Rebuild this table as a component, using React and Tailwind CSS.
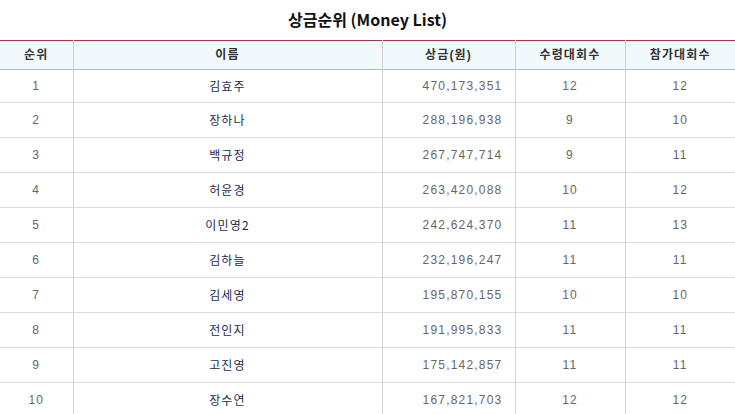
import React from 'react';

const rows = [
  [1, '김효주', '470,173,351', 12, 12],
  [2, '장하나', '288,196,938', 9, 10],
  [3, '백규정', '267,747,714', 9, 11],
  [4, '허윤경', '263,420,088', 10, 12],
  [5, '이민영2', '242,624,370', 11, 13],
  [6, '김하늘', '232,196,247', 11, 11],
  [7, '김세영', '195,870,155', 10, 10],
  [8, '전인지', '191,995,833', 11, 11],
  [9, '고진영', '175,142,857', 11, 11],
  [10, '장수연', '167,821,703', 12, 12],
];

const MoneyList = () => {
  return (
    <div className="w-[735px] bg-white font-['Liberation_Sans','Noto_Sans_CJK_KR',sans-serif]">
      <h1 className="h-[40px] pt-[8px] text-center text-[16px] font-bold leading-[22px] text-[#111] font-['Noto_Sans_CJK_KR',sans-serif]">
        상금순위 (Money List)
      </h1>

      {/* Ranking table */}
      <table className="w-full table-fixed border-collapse text-[12px] tracking-[0.1em]">
        <colgroup>
          <col className="w-[73px]" />
          <col className="w-[309px]" />
          <col className="w-[133px]" />
          <col className="w-[110px]" />
          <col />
        </colgroup>
        <thead>
          <tr className="h-[29px] border-t border-t-[#9b3a48] border-b border-b-[#b8b8b8] bg-[#f2f9fd] text-[#333] font-bold">
            <th className="border-r border-[#cfcfcf] text-center">순위</th>
            <th className="border-r border-[#cfcfcf] text-center">이름</th>
            <th className="border-r border-[#cfcfcf] text-center">상금(원)</th>
            <th className="border-r border-[#cfcfcf] text-center">수령대회수</th>
            <th className="text-center">참가대회수</th>
          </tr>
        </thead>
        <tbody>
          {rows.map((r, i) => (
            <tr key={i} className={`${i === 0 ? 'h-[33px]' : 'h-[35px]'} border-b border-[#dcdcdc] text-[#666]`}>
              <td className="border-r border-[#d6d6d6] text-center">{r[0]}</td>
              <td className="border-r border-[#d6d6d6] text-center text-[#1c2c4c] font-['Noto_Sans_CJK_KR',sans-serif]">{r[1]}</td>
              <td className="border-r border-[#d6d6d6] pr-[12px] text-right">{r[2]}</td>
              <td className="border-r border-[#d6d6d6] text-center">{r[3]}</td>
              <td className="text-center">{r[4]}</td>
            </tr>
          ))}
        </tbody>
      </table>
    </div>
  );
};

export default function App() {
  return <MoneyList />;
}
